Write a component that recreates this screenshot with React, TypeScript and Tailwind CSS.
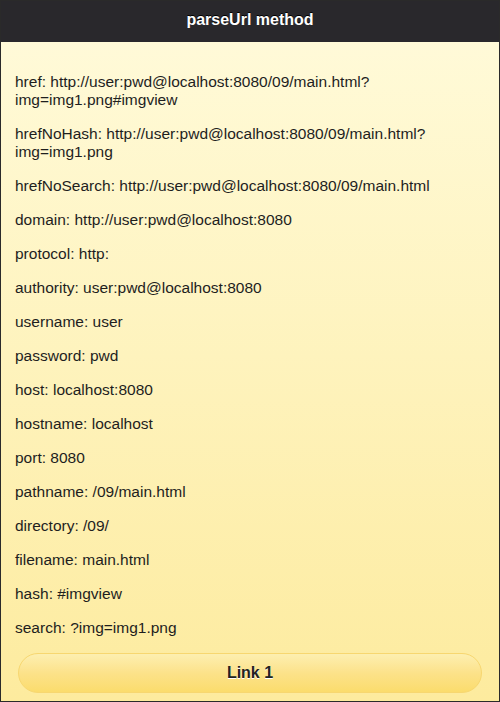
const rows: [string, string][] = [
  ["href", "http://user:pwd@localhost:8080/09/main.html?img=img1.png#imgview"],
  ["hrefNoHash", "http://user:pwd@localhost:8080/09/main.html?img=img1.png"],
  ["hrefNoSearch", "http://user:pwd@localhost:8080/09/main.html"],
  ["domain", "http://user:pwd@localhost:8080"],
  ["protocol", "http:"],
  ["authority", "user:pwd@localhost:8080"],
  ["username", "user"],
  ["password", "pwd"],
  ["host", "localhost:8080"],
  ["hostname", "localhost"],
  ["port", "8080"],
  ["pathname", "/09/main.html"],
  ["directory", "/09/"],
  ["filename", "main.html"],
  ["hash", "#imgview"],
  ["search", "?img=img1.png"],
];

export default function App() {
  return (
    <div
      className="h-[702px] w-[500px] flex flex-col border border-[#2a2a2a] overflow-hidden"
      style={{ fontFamily: '"Liberation Sans", Arial, sans-serif' }}
    >
      <div className="h-[41px] shrink-0 bg-[#29282c] flex items-center justify-center pb-[3px]">
        <h1 className="text-white font-bold text-[16px] [text-shadow:0_-1px_0_#000]">
          parseUrl method
        </h1>
      </div>
      <div className="flex-1 bg-gradient-to-b from-[#fffad8] to-[#fdeb9e] px-[14px] pt-[15px] text-[#1e1e1e]">
        {rows.map(([k, v]) => (
          <p key={k} className="my-4 text-[15.5px] leading-[18px]">
            {k}: {v.includes("?") && v.length > 50 ? (
              <>
                {v.slice(0, v.indexOf("?") + 1)}
                <br />
                {v.slice(v.indexOf("?") + 1)}
              </>
            ) : (
              v
            )}
          </p>
        ))}
        <a
          href="#"
          className="mx-[3px] mt-[16px] flex h-[40px] items-center justify-center rounded-full border border-[#f7d770] bg-gradient-to-b from-[#fdefb0] via-[#fce28a] to-[#fbdc6c] text-[16px] font-bold text-[#222] [text-shadow:0_1px_0_#fff]"
        >
          Link 1
        </a>
      </div>
    </div>
  );
}
